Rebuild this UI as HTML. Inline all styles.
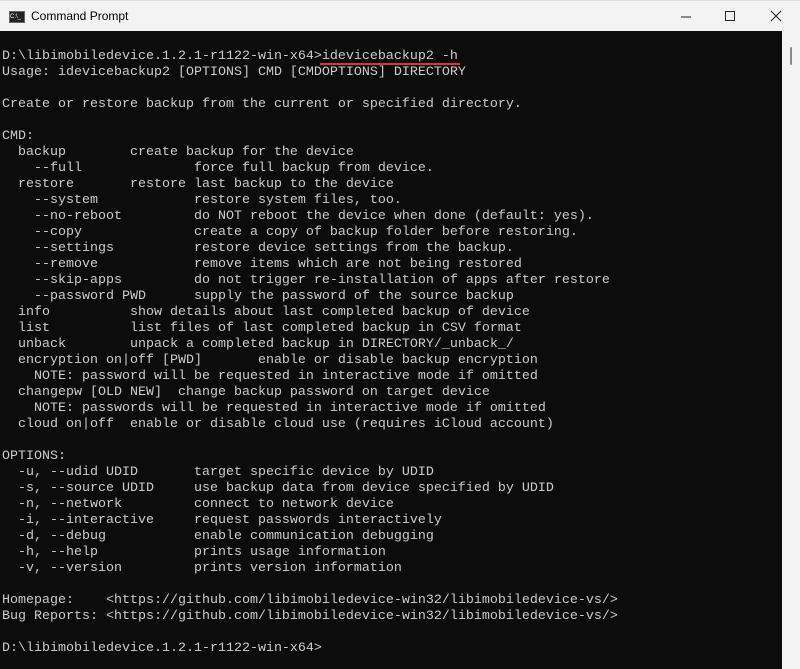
<!DOCTYPE html>
<html><head><style>
body{margin:0;width:800px;height:669px;overflow:hidden;background:#f3f3f3;font-family:"Liberation Sans",sans-serif;position:relative}
#tb{position:absolute;left:0;top:0;width:800px;height:31px;background:#f3f3f3;border-top:1px solid #ddd}
#tt{position:absolute;left:31px;top:8px;font-size:12px;color:#000}
#ic{position:absolute;left:9px;top:10px;width:14px;height:10px;background:#222;border:1px solid #666;color:#fff;font-size:6px;line-height:10px}
#con{position:absolute;left:0;top:31px;width:782px;height:638px;background:#0c0c0c}
#sb{position:absolute;left:782px;top:31px;width:18px;height:638px;background:#f3f3f3}
#th{position:absolute;left:790px;top:47px;width:2px;height:18px;background:#8a8a8a;border-radius:1px}
pre{position:absolute;left:2px;top:49px;margin:0;font-family:"Liberation Mono",monospace;font-size:13.33px;line-height:16px;color:#cccccc}
#ul{position:absolute;left:320px;top:63px;width:140px;height:2px;background:#e0303a}
svg{position:absolute}
</style></head><body>
<div id="tb"><div id="ic">C:\_</div><div id="tt">Command Prompt</div>
<svg style="left:680px;top:10px" width="12" height="12"><line x1="1" y1="6" x2="11" y2="6" stroke="#222"/></svg>
<svg style="left:724px;top:9px" width="12" height="12"><rect x="1.5" y="1.5" width="9" height="9" fill="none" stroke="#222"/></svg>
<svg style="left:770px;top:9px" width="12" height="12"><path d="M1 1L11 11M11 1L1 11" stroke="#222"/></svg>
</div>
<div id="con"></div>
<div id="sb"></div><div id="th"></div>
<pre>D:\libimobiledevice.1.2.1-r1122-win-x64>idevicebackup2 -h
Usage: idevicebackup2 [OPTIONS] CMD [CMDOPTIONS] DIRECTORY

Create or restore backup from the current or specified directory.

CMD:
  backup        create backup for the device
    --full              force full backup from device.
  restore       restore last backup to the device
    --system            restore system files, too.
    --no-reboot         do NOT reboot the device when done (default: yes).
    --copy              create a copy of backup folder before restoring.
    --settings          restore device settings from the backup.
    --remove            remove items which are not being restored
    --skip-apps         do not trigger re-installation of apps after restore
    --password PWD      supply the password of the source backup
  info          show details about last completed backup of device
  list          list files of last completed backup in CSV format
  unback        unpack a completed backup in DIRECTORY/_unback_/
  encryption on|off [PWD]       enable or disable backup encryption
    NOTE: password will be requested in interactive mode if omitted
  changepw [OLD NEW]  change backup password on target device
    NOTE: passwords will be requested in interactive mode if omitted
  cloud on|off  enable or disable cloud use (requires iCloud account)

OPTIONS:
  -u, --udid UDID       target specific device by UDID
  -s, --source UDID     use backup data from device specified by UDID
  -n, --network         connect to network device
  -i, --interactive     request passwords interactively
  -d, --debug           enable communication debugging
  -h, --help            prints usage information
  -v, --version         prints version information

Homepage:    &lt;https://github.com/libimobiledevice-win32/libimobiledevice-vs/&gt;
Bug Reports: &lt;https://github.com/libimobiledevice-win32/libimobiledevice-vs/&gt;

D:\libimobiledevice.1.2.1-r1122-win-x64&gt;</pre>
<div id="ul"></div>
</body></html>
